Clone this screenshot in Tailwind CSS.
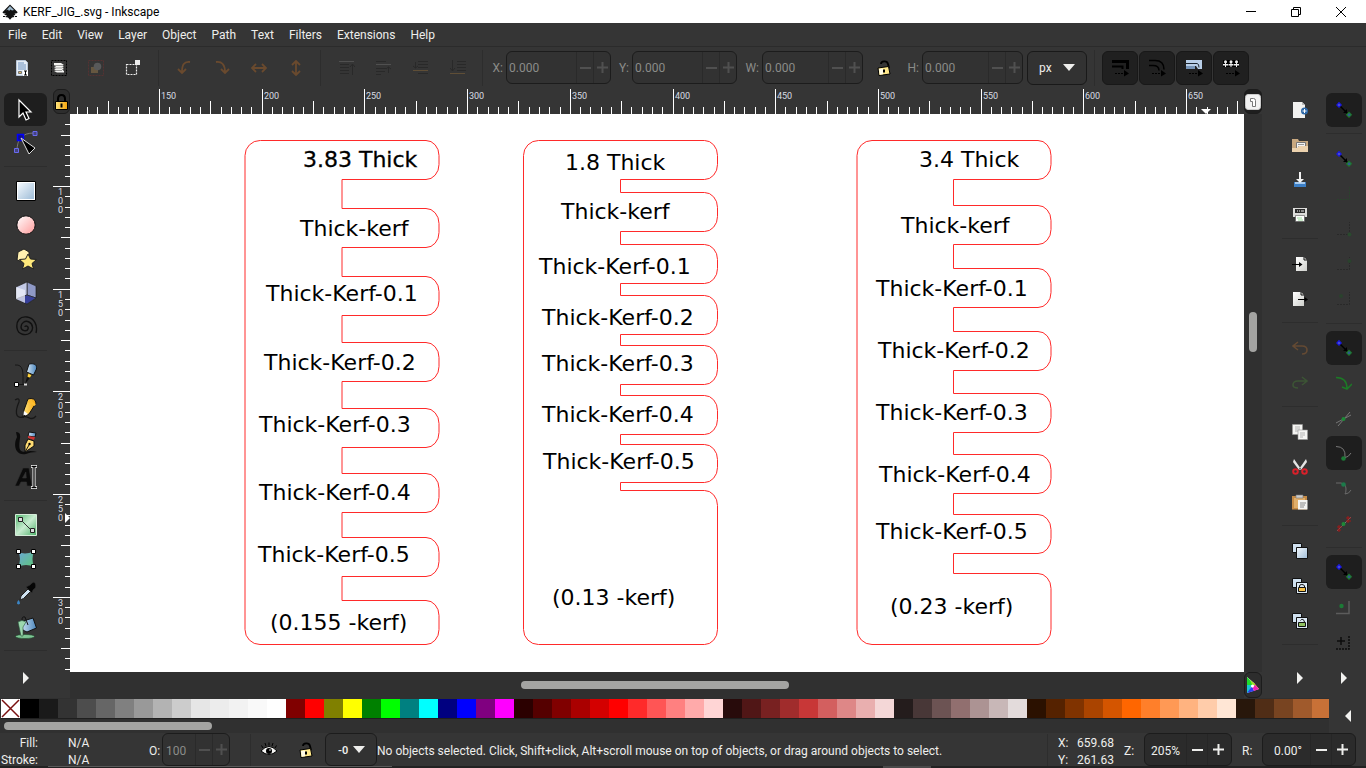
<!DOCTYPE html>
<html lang="en">
<head>
<meta charset="utf-8">
<title>KERF_JIG_.svg - Inkscape</title>
<script src="https://cdn.jsdelivr.net/npm/@tailwindcss/browser@4"></script>
</head>
<body class="h-screen flex flex-col overflow-hidden bg-[#353535] text-[#eeeeec] text-[12px] leading-4 font-['Roboto','Noto_Sans',sans-serif]">

<svg class="absolute w-0 h-0" aria-hidden="true">
  <defs>
    <linearGradient id="blue" x1="0" y1="0" x2="1" y2="1"><stop offset="0" stop-color="#f4f9fd"/><stop offset="1" stop-color="#9fbdd8"/></linearGradient>
    <linearGradient id="pink" x1="0" y1="0" x2="1" y2="1"><stop offset="0" stop-color="#fff"/><stop offset="1" stop-color="#ff9a9a"/></linearGradient>
    <linearGradient id="green" x1="0" y1="0" x2="1" y2="1"><stop offset="0" stop-color="#52b56e"/><stop offset=".5" stop-color="#c8ecd0"/><stop offset="1" stop-color="#4cb068"/></linearGradient>
    <linearGradient id="mesh" x1="0" y1="0" x2="1" y2="1"><stop offset="0" stop-color="#6aa6d8"/><stop offset="1" stop-color="#5fc67a"/></linearGradient>
    <linearGradient id="gold" x1="0" y1="0" x2="1" y2="0"><stop offset="0" stop-color="#ffe680"/><stop offset="1" stop-color="#f5a30a"/></linearGradient>
    <linearGradient id="paper" x1="0" y1="0" x2="1" y2="1"><stop offset="0" stop-color="#fff"/><stop offset="1" stop-color="#cfd0cc"/></linearGradient>
    <linearGradient id="steel" x1="0" y1="0" x2="1" y2="0"><stop offset="0" stop-color="#d8e9f7"/><stop offset="1" stop-color="#4b86bd"/></linearGradient>
  </defs>
  <symbol id="node-snap" viewBox="0 0 18 18">
    <path d="M4 4l9 9" stroke="#000" stroke-width="1.4"/><path d="M12 8v4H8z" fill="#000"/>
    <path d="M4 .8L7 4 4 7 1 4z" fill="#1a1adf"/><circle cx="4" cy="4" r="1" fill="#5a5ad0"/>
    <path d="M14 10.500l3.200 3.300-3.200 3.200-3.200-3.200z" fill="#1c7a26"/><circle cx="14" cy="13.800" r="1.500" fill="#2e5a8a"/>
  </symbol>
  <symbol id="open-lock" viewBox="0 0 16 18">
    <path d="M5 5c0-3 6-4 7 0l1 4" fill="none" stroke="#000" stroke-width="1.800"/>
    <path d="M2 9l10.500-1.500L14 15 3 16.500z" fill="#ffe88a" stroke="#000"/><path d="M3 10l4-.6v5.900l-3.300.4z" fill="#fffbe6"/>
    <path d="M7 10.500h2v3H7z" fill="#000"/>
  </symbol>
  <symbol id="triangle-right" viewBox="0 0 8 12"><path d="M1 0l6 6-6 6z" fill="#f2f2f0"/></symbol>
  <symbol id="triangle-down" viewBox="0 0 12 7"><path d="M0 0h12L6 7z" fill="#eeeeec"/></symbol>
</svg>

<!-- Title bar -->
<header class="h-[23px] shrink-0 bg-white text-black flex items-center pr-[3px]">
  <svg class="w-4 h-4 ml-[2px]" viewBox="0 0 16 16"><path d="M8 .5L15.500 8c.5 1-1.500 1.500-3 1.800l1 1.200-2 .5 1 1.500-2.500.5L8 15.800l-2-2.300-3-.5 2-1.500-3-.7 2-1C2 9.500 0 9 .7 8z" fill="#111"/><path d="M8 2l4 4-2 .5-1.500-1L7 7 6 5.500 4 6.500z" fill="#9db8cc"/><path d="M1 12h2v1H1zM13 12h2v1h-2z" fill="#111"/></svg>
  <h1 class="ml-[5px] grow">KERF_JIG_.svg - Inkscape</h1>
  <button aria-label="Minimize" class="w-[45px] h-full grid place-items-center"><svg class="w-[10px] h-[10px]" viewBox="0 0 10 10"><path d="M0 4.500h10" stroke="#000"/></svg></button>
  <button aria-label="Restore" class="w-[45px] h-full grid place-items-center"><svg class="w-[10px] h-[10px]" viewBox="0 0 10 10" fill="none" stroke="#000"><path d="M.5 2.500h7v7h-7zM2.500 2V.5h7v7H8"/></svg></button>
  <button aria-label="Close" class="w-[45px] h-full grid place-items-center"><svg class="w-[10px] h-[10px]" viewBox="0 0 10 10"><path d="M0 0l10 10M10 0L0 10" stroke="#000"/></svg></button>
</header>

<!-- Menu bar -->
<nav class="h-6 shrink-0 flex items-center gap-[15px] pl-2 border-b border-[#2b2b2b]">
  <button>File</button><button>Edit</button><button>View</button><button>Layer</button><button>Object</button><button>Path</button><button>Text</button><button>Filters</button><button>Extensions</button><button>Help</button>
</nav>

<!-- Tool controls -->
<section aria-label="Tool controls" class="h-[42px] shrink-0 flex items-center pl-[3px] pb-px">
  <button aria-label="Select all" class="w-[37px] h-8 grid place-items-center"><svg class="w-4 h-4" viewBox="0 0 16 16"><path d="M2.500.5h9l2 2v13h-11z" fill="#e6eef7" stroke="#b8c6d8"/><path d="M4 3h6M4 5h8M4 7h8M4 9h8" stroke="#6f93c0"/><path d="M4.500 11.500h3v2h-3z" fill="#e0b860" stroke="#777"/><path d="M9 10h5v6H9z" fill="#fff"/><path d="M10 11h3M10 15h3M11.500 11v4" stroke="#000"/></svg></button>
  <button aria-label="Select all in all layers" class="w-[37px] h-8 grid place-items-center"><svg class="w-4 h-4" viewBox="0 0 16 16"><path d="M.5.500h15v15H.5z" fill="none" stroke="#000" stroke-dasharray="2 1"/><path d="M3 3h7l3 2-2 .5 2 1.500-2 .5 2 1.500-2 .5 2 1.500v1.500H6L3 11l2-.5L3 9l2-.5L3 7l2-.5L3 5z" fill="#f4f4f2"/><path d="M4 5.500h7M4 8h7M4 10.500h7" stroke="#777" stroke-width=".7"/></svg></button>
  <button aria-label="Deselect" class="w-[37px] h-8 grid place-items-center opacity-30"><svg class="w-4 h-4" viewBox="0 0 16 16"><path d="M.5.500h15v15H.5z" fill="none" stroke="#a02c2c" stroke-dasharray="2 1"/><path d="M3 7h7v6H3z" fill="#d6a55a"/><circle cx="9.500" cy="6.500" r="3.800" fill="#a8acb0"/></svg></button>
  <button aria-label="Toggle touch selection" class="w-[37px] h-8 grid place-items-center"><svg class="w-4 h-4" viewBox="0 0 16 16"><path d="M1.500 4.500h10v10h-10z" fill="none" stroke="#eee" stroke-width="1.200" stroke-dasharray="2 1"/><path d="M10 0h5v5h-5z" fill="#eee"/></svg></button>
  <div class="ml-[7px] mr-[7px] w-px h-9 bg-[#2d2d2d]"></div>
  <button aria-label="Rotate left" class="w-[37px] h-8 grid place-items-center"><svg class="w-4 h-4" viewBox="0 0 16 16" fill="none" stroke="#6a4a2e" stroke-width="1.800"><path d="M13 2C7 1 5 5 5 12M1 9l4 4 4-4"/></svg></button>
  <button aria-label="Rotate right" class="w-[37px] h-8 grid place-items-center"><svg class="w-4 h-4" viewBox="0 0 16 16" fill="none" stroke="#6a4a2e" stroke-width="1.800"><path d="M2 2c6-1 9 3 9 10M7 9l4 4 4-4"/></svg></button>
  <button aria-label="Flip horizontal" class="w-[37px] h-8 grid place-items-center"><svg class="w-4 h-4" viewBox="0 0 16 16" fill="none" stroke="#6a4a2e" stroke-width="1.800"><path d="M1 8h14M5 4L1 8l4 4M11 4l4 4-4 4"/></svg></button>
  <button aria-label="Flip vertical" class="w-[37px] h-8 grid place-items-center"><svg class="w-4 h-4" viewBox="0 0 16 16" fill="none" stroke="#6a4a2e" stroke-width="1.800"><path d="M8 1v14M4 5l4-4 4 4M4 11l4 4 4-4"/></svg></button>
  <div class="ml-[6px] mr-[7px] w-px h-9 bg-[#2d2d2d]"></div>
  <button aria-label="Raise to top" class="w-[37px] h-8 grid place-items-center"><svg class="w-4 h-4" viewBox="0 0 16 16" fill="none" stroke="#292929"><path d="M1 4.500h9M1 7.500h9M1 10.500h9M1 13.500h9M13.500 4v11M11 7l2.500-3L16 7"/><path d="M0 1.500h15" stroke="#505050"/></svg></button>
  <button aria-label="Raise" class="w-[37px] h-8 grid place-items-center"><svg class="w-4 h-4" viewBox="0 0 16 16" fill="none" stroke="#292929"><path d="M0 1.500h10M0 8.500h10M0 11.500h9M0 14.500h5M12.500 7v6M10 9l2.500-2L15 9"/><path d="M0 4.500h15" stroke="#505050"/></svg></button>
  <button aria-label="Lower" class="w-[37px] h-8 grid place-items-center"><svg class="w-4 h-4" viewBox="0 0 16 16" fill="none" stroke="#292929"><path d="M5 1.500h10M5 4.500h10M5 7.500h10M5 13.500h10M2.500 2v6M0 6l2.500 2L5 6"/><path d="M0 10.500h15" stroke="#5f4e36"/></svg></button>
  <button aria-label="Lower to bottom" class="w-[37px] h-8 grid place-items-center"><svg class="w-4 h-4" viewBox="0 0 16 16" fill="none" stroke="#292929"><path d="M7 1.500h9M7 4.500h9M7 7.500h9M7 10.500h9M2.500 0v11M0 8l2.500 3L5 8"/><path d="M0 13.500h15" stroke="#5f4e36"/></svg></button>
  <div class="ml-[6px] w-px h-9 bg-[#2d2d2d]"></div>

  <label for="fx" class="w-[23px] text-right pr-[3px] text-[#8b8c89]">X:</label>
  <div class="w-[105px] h-[33px] flex rounded-md border border-[#1c1c1c] bg-[#323232] text-[#8b8c89]"><input id="fx" value="0.000" class="w-0 grow pl-[2px] bg-transparent"><button aria-label="Decrease X" class="w-[17px] border-l border-[#2a2a2a] grid place-items-center"><i class="w-[11px] h-[2px] bg-[#505050]"></i></button><button aria-label="Increase X" class="w-[17px] border-l border-[#2a2a2a] grid place-items-center"><svg class="w-[11px] h-[11px]" viewBox="0 0 11 11"><path d="M0 5.500h11M5.500 0v11" stroke="#505050" stroke-width="2"/></svg></button></div>
  <label for="fy" class="w-[21px] text-right pr-[3px] text-[#8b8c89]">Y:</label>
  <div class="w-[105px] h-[33px] flex rounded-md border border-[#1c1c1c] bg-[#323232] text-[#8b8c89]"><input id="fy" value="0.000" class="w-0 grow pl-[2px] bg-transparent"><button aria-label="Decrease Y" class="w-[17px] border-l border-[#2a2a2a] grid place-items-center"><i class="w-[11px] h-[2px] bg-[#505050]"></i></button><button aria-label="Increase Y" class="w-[17px] border-l border-[#2a2a2a] grid place-items-center"><svg class="w-[11px] h-[11px]" viewBox="0 0 11 11"><path d="M0 5.500h11M5.500 0v11" stroke="#505050" stroke-width="2"/></svg></button></div>
  <label for="fw" class="w-[25px] text-right pr-[3px] text-[#8b8c89]">W:</label>
  <div class="w-[101px] h-[33px] flex rounded-md border border-[#1c1c1c] bg-[#323232] text-[#8b8c89]"><input id="fw" value="0.000" class="w-0 grow pl-[2px] bg-transparent"><button aria-label="Decrease W" class="w-[17px] border-l border-[#2a2a2a] grid place-items-center"><i class="w-[11px] h-[2px] bg-[#505050]"></i></button><button aria-label="Increase W" class="w-[17px] border-l border-[#2a2a2a] grid place-items-center"><svg class="w-[11px] h-[11px]" viewBox="0 0 11 11"><path d="M0 5.500h11M5.500 0v11" stroke="#505050" stroke-width="2"/></svg></button></div>
  <button aria-label="Lock width and height" class="w-[42px] h-8 grid place-items-center"><svg class="w-4 h-[18px]"><use href="#open-lock"/></svg></button>
  <label for="fh" class="w-[17px] text-right pr-[3px] text-[#8b8c89]">H:</label>
  <div class="w-[101px] h-[33px] flex rounded-md border border-[#1c1c1c] bg-[#323232] text-[#8b8c89]"><input id="fh" value="0.000" class="w-0 grow pl-[2px] bg-transparent"><button aria-label="Decrease H" class="w-[17px] border-l border-[#2a2a2a] grid place-items-center"><i class="w-[11px] h-[2px] bg-[#505050]"></i></button><button aria-label="Increase H" class="w-[17px] border-l border-[#2a2a2a] grid place-items-center"><svg class="w-[11px] h-[11px]" viewBox="0 0 11 11"><path d="M0 5.500h11M5.500 0v11" stroke="#505050" stroke-width="2"/></svg></button></div>
  <div class="ml-1 w-[60px] h-[34px] grid items-center rounded-md border border-[#191919] bg-[#323232]">
    <select aria-label="Units" class="col-start-1 row-start-1 appearance-none w-full h-full pl-[11px] text-[#eeeeec]"><option>px</option></select>
    <svg class="col-start-1 row-start-1 justify-self-end mr-[11px] w-3 h-[7px] pointer-events-none"><use href="#triangle-down"/></svg>
  </div>
  <div class="ml-[7px] mr-[7px] w-px h-9 bg-[#2d2d2d]"></div>
  <div class="flex gap-px">
    <button aria-label="Scale stroke width" class="w-9 h-[34px] rounded-md border border-[#181818] bg-[#202020] grid place-items-center"><svg class="w-[17px] h-[18px]" viewBox="0 0 17 18" fill="none" stroke="#000"><path d="M0 2.500h15.500V10" stroke-width="3"/><path d="M0 7.500h10.500V10" stroke-width="2"/><path d="M3 14.500h10" stroke-dasharray="2 1"/><path d="M12 11l5 3.500-5 3z" fill="#000" stroke="none"/></svg></button>
    <button aria-label="Scale corners" class="w-9 h-[34px] rounded-md border border-[#181818] bg-[#202020] grid place-items-center"><svg class="w-[17px] h-[18px]" viewBox="0 0 17 18" fill="none" stroke="#000"><path d="M0 1.500h6q9 0 9 9M0 6.500h4q6 0 6 5" stroke-width="1.500"/><path d="M3 14.500h10" stroke-dasharray="2 1"/><path d="M12 11l5 3.500-5 3z" fill="#000" stroke="none"/></svg></button>
    <button aria-label="Move gradients" class="w-9 h-[34px] rounded-md border border-[#181818] bg-[#202020] grid place-items-center"><svg class="w-[17px] h-[18px]" viewBox="0 0 17 18"><path d="M0 1h16v9h-4l-2-3H0z" fill="#b9cfe8"/><path d="M0 4.500h11q2 0 2 4" fill="none" stroke="#1a2530"/><path d="M0 7h9v3H0z" fill="#7795b8"/><path d="M3 14.500h10" stroke="#000" stroke-dasharray="2 1"/><path d="M12 11l5 3.500-5 3z"/></svg></button>
    <button aria-label="Move patterns" class="w-9 h-[34px] rounded-md border border-[#181818] bg-[#202020] grid place-items-center"><svg class="w-[17px] h-[18px]" viewBox="0 0 17 18"><path d="M0 1h16v7H0z" fill="#000"/><g fill="#eee"><circle cx="2.500" cy="2.800" r="1.500"/><circle cx="8" cy="2.800" r="1.500"/><circle cx="13.500" cy="2.800" r="1.500"/><path d="M0 5h5v1.500H0zM5.500 5h5v1.500h-5zM11 5h5v1.500h-5zM2 3h1v5H2zM7.500 3h1v5h-1zM13 3h1v5h-1z"/></g><path d="M3 14.500h10" stroke="#000" stroke-dasharray="2 1"/><path d="M12 11l5 3.500-5 3z"/></svg></button>
  </div>
</section>

<main class="grow min-h-0 flex">
  <!-- Toolbox -->
  <aside aria-label="Toolbox" class="w-[53px] shrink-0 flex flex-col pt-1 pl-1 pr-[6px]">
    <button aria-label="Select" class="h-[33px] grid place-items-center rounded-md bg-[#1e1e1e]"><svg class="w-6 h-6" viewBox="0 0 24 24"><path d="M5 2v17l4-4 3 7 3-1.500-3-6.500h5z" fill="#000" stroke="#fff" stroke-width="1.200"/></svg></button>
    <button aria-label="Node" class="h-[34px] grid place-items-center"><svg class="w-6 h-6" viewBox="0 0 24 24"><path d="M3 20C3 8 8 2 20 2" fill="none" stroke="#777"/><path d="M.5 17.500h4v4h-4zM19 .5h4v4h-4z" fill="#444480" stroke="#6a6af0"/><path d="M3.500 3.500h6v6h-6z" fill="#10108a" stroke="#00f" stroke-width="1.500"/><path d="M7 7l14 10-6 6z" fill="#000" stroke="#ddd"/></svg></button>
    <div class="mt-[6px] mb-[7px] h-px bg-[#2d2d2d]"></div>
    <button aria-label="Rectangle" class="h-[34px] grid place-items-center"><svg class="w-5 h-5" viewBox="0 0 20 20"><path d="M.5.500h19v19H.5z" fill="#fff" stroke="#000"/><path d="M2 2h16v16H2z" fill="url(#blue)"/></svg></button>
    <button aria-label="Ellipse" class="h-[34px] grid place-items-center"><svg class="w-5 h-5" viewBox="0 0 20 20"><circle cx="10" cy="10" r="9.200" fill="url(#pink)" stroke="#111"/></svg></button>
    <button aria-label="Star" class="h-[34px] grid place-items-center"><svg class="w-[22px] h-[22px]" viewBox="0 0 22 22" stroke="#222"><path d="M3 4l6-3 5 3v6l-5 4-7-2z" fill="#fff0b0"/><path d="M13 6l2.500 5 6 .5-4.500 4 1.500 5.500-5.500-3-5.500 3 1.500-5.500-4.500-4 6-.5z" fill="#ffe97c"/></svg></button>
    <button aria-label="3D box" class="h-[34px] grid place-items-center"><svg class="w-[22px] h-6" viewBox="0 0 22 24" stroke="#222" stroke-width=".7"><path d="M1 6L12 1l9 4v12l-9 6-11-5z" fill="#dfe3f5"/><path d="M12 1l9 4v12l-9-3z" fill="#8f99c6"/><path d="M12 1v13l-11 4V6z" fill="#c3cae6"/><path d="M1 18l11-4 9 3-9 6z" fill="#37409a"/><path d="M1 6l9 3v13l-9-4z" fill="#eef0fa" fill-opacity=".75" stroke="none"/></svg></button>
    <button aria-label="Spiral" class="h-[34px] grid place-items-center"><svg class="w-6 h-6" viewBox="0 0 24 24"><path d="M11 12c0-2 4-1 3 2s-7 2-7-2 4-7 8-5 5 8 1 11-12 2-13-5S6 1 13 2s11 8 9 16" fill="none" stroke="#111" stroke-width="1.400"/></svg></button>
    <div class="mt-[6px] mb-[7px] h-px bg-[#2d2d2d]"></div>
    <button aria-label="Pen" class="h-[34px] grid place-items-center"><svg class="w-6 h-6" viewBox="0 0 24 24"><path d="M1 2c9-1 8 8 8 19M3 21.500h9" fill="none" stroke="#171717"/><path d="M.5 19.500h4v4h-4z" fill="#fff" stroke="#000"/><path d="M10 20.500h3v2h-3z" fill="#ddd"/><path d="M15 1c6-1 8 1 7.500 5l-3 6-7-3z" fill="url(#steel)" stroke="#111"/><path d="M14 10l4 2-2 3-3-1z" fill="#ffd23a" stroke="#111" stroke-width=".6"/><path d="M13 14l2.500 1.500L11 21z" fill="#111"/></svg></button>
    <button aria-label="Pencil" class="h-[34px] grid place-items-center"><svg class="w-6 h-6" viewBox="0 0 24 24"><path d="M1 3q5-3 4 2c-4 9-4 17 4 15 5-2 8 5 13-1" fill="none" stroke="#171717" stroke-width="1.300"/><path d="M14 2q7-2 8 4l-7 11-6 3 1-7z" fill="url(#gold)" stroke="#111"/><path d="M15 2.500l7 4.500-1.500 2-7-4z" fill="#ffbf30"/><path d="M10 14l4 3-5 3z" fill="#fff"/><path d="M9.500 17.500L12 19l-3 1.500z"/></svg></button>
    <button aria-label="Calligraphy" class="h-[34px] grid place-items-center"><svg class="w-6 h-6" viewBox="0 0 24 24"><path d="M2 1q5 0 4 6C5 15 4 21 11 21q5-2 12 0-7 0-11 2C1 25-1 14 3 6z" fill="#0c0c0c"/><path d="M15 1l7 1-1 4-7-1z" fill="url(#steel)" stroke="#111"/><path d="M14 5l7 1-1 3-6-2z" fill="#c33"/><path d="M14 8l6 2v5l-9 6 0-7z" fill="#ffdc73" stroke="#111"/><path d="M11 21l4-7" stroke="#111"/><circle cx="15.500" cy="13" r="1.200"/></svg></button>
    <button aria-label="Text" class="h-[34px] grid place-items-center"><svg class="w-6 h-6" viewBox="0 0 24 24"><path d="M1 21L9 3h6l3 18h-5l-.5-4H7l-2 4zM8.500 13h3.800l-.5-6z" fill="#0b0b0b" stroke="#333" stroke-width=".6" fill-rule="evenodd"/><path d="M17 1.500h6M17 22.500h6M20 2v20" stroke="#fff" stroke-width="3"/><path d="M17.500 1.500h5M17.500 22.500h5M20 2v20" stroke="#000" stroke-width="1.300"/></svg></button>
    <div class="mt-[6px] mb-[7px] h-px bg-[#2d2d2d]"></div>
    <button aria-label="Gradient" class="h-[34px] grid place-items-center"><svg class="w-[22px] h-[22px]" viewBox="0 0 22 22"><path d="M.5.500h21v21H.5z" fill="url(#green)" stroke="#d5ecd9"/><path d="M6 6l11 11" stroke="#333"/><path d="M3.500 3.500h4v4h-4zM15.500 14.500h4v4h-4z" fill="#ddd" stroke="#222"/></svg></button>
    <button aria-label="Mesh" class="h-[34px] grid place-items-center"><svg class="w-5 h-5" viewBox="0 0 20 20"><path d="M2 2q6 5 16 0-3 8 0 16-8-4-16 0 4-8 0-16z" fill="url(#mesh)"/><path d="M.5.500h4v4h-4zM15.500.500h4v4h-4zM.5 15.500h4v4h-4zM15.500 15.500h4v4h-4z" fill="#fff" stroke="#000"/></svg></button>
    <button aria-label="Dropper" class="h-[34px] grid place-items-center"><svg class="w-6 h-6" viewBox="0 0 24 24"><path d="M14 8l2.500 2.500-7 7-3.500 1.500 1-4z" fill="#cfe3f3" stroke="#222"/><path d="M12 6l6 6 1-3q4-2 2.500-6T16 4z" fill="#050505" stroke="#333" stroke-width=".6"/><path d="M4.500 19q3 4 0 4.500-3-.5 0-4.500z" fill="#3b86c6"/></svg></button>
    <button aria-label="Paint bucket" class="h-[34px] grid place-items-center"><svg class="w-6 h-6" viewBox="0 0 24 24"><ellipse cx="11" cy="21.500" rx="9.500" ry="2" fill="#7fc796" stroke="#1f4b2b" stroke-width=".6"/><path d="M6 7l13-4 3.500 10L13 17q-7-2-7-10z" fill="url(#steel)" stroke="#111"/><path d="M4 7q4-3 8 0l-3 5v9H7z" fill="#9dd8ae" stroke="#28563a" stroke-width=".6"/><path d="M8 5q0-4 3-3l3 8" fill="none" stroke="#111"/></svg></button>
    <div class="mt-[6px] mb-[10px] h-px bg-[#2d2d2d]"></div>
    <button aria-label="More tools" class="h-[34px] grid place-items-center"><svg class="w-2 h-3"><use href="#triangle-right"/></svg></button>
  </aside>

  <!-- Canvas with rulers -->
  <section class="grow min-w-0 grid grid-cols-[17px_minmax(0,1fr)_18px] grid-rows-[25px_minmax(0,1fr)_26px]">
    <button aria-label="Lock guides" class="rounded-md border border-[#1c1c1c] bg-[#2d2d2d] grid place-items-center"><svg class="w-[13px] h-4" viewBox="0 0 13 16"><path d="M3 8V5q0-4 3.500-4T10 5v3" fill="none" stroke="#000" stroke-width="2"/><path d="M.5 7.500h12v8H.5z" fill="url(#gold)" stroke="#000"/><path d="M5.500 9.500h2v4h-2z"/></svg></button>
    <svg id="ruler-top" class="w-full h-full" role="img" aria-label="Horizontal ruler"><path d="M1131 20h10l-5 5z" fill="#fff"/><g></g></svg>
    <button aria-label="Display mode" class="rounded-md border border-[#1c1c1c] bg-[#1e1e1e] grid place-items-center"><svg class="w-4 h-4" viewBox="0 0 16 16"><path d="M3 .500h10q2.500 0 2.500 3v9q0 3-2.500 3H3Q.5 15.500.5 12.500v-9Q.5.500 3 .500z" fill="#f2f2f2" stroke="#ccc"/><path d="M5.500 4.500h3q2 0 2 2v6h-3v-5h-2z" fill="#fff" stroke="#777"/></svg></button>

    <svg id="ruler-left" class="w-full h-full" role="img" aria-label="Vertical ruler"><path d="M12 399v10l5-5z" fill="#fff"/><g></g></svg>
    <div class="bg-white overflow-hidden">
      <svg class="w-full h-full" role="img" aria-label="Kerf jig drawing">
        <g transform="translate(-70 -114)">
          <g fill="none" stroke="#ff2a2a">
            <path d="M260.500 140.500H426a13 15 0 0 1 13 15v9a13 15 0 0 1-13 15H342v29H426a13 15 0 0 1 13 15v9a13 15 0 0 1-13 15H342v29H426a13 15 0 0 1 13 15v9a13 15 0 0 1-13 15H342v27H426a13 15 0 0 1 13 15v9a13 15 0 0 1-13 15H342v27H426a13 15 0 0 1 13 15v9a13 15 0 0 1-13 15H342v26H426a13 15 0 0 1 13 15v9a13 15 0 0 1-13 15H342v25H426a13 15 0 0 1 13 15v9a13 15 0 0 1-13 15H342v24H426a13 15 0 0 1 13 15v14a13 15 0 0 1-13 15H260a15 15 0 0 1-15-15V155.500a15 15 0 0 1 15-15z"/>
            <path d="M538.500 140.500H704.500a13 15 0 0 1 13 15v9a13 15 0 0 1-13 15H620.500v13H704.500a13 15 0 0 1 13 15v9a13 15 0 0 1-13 15H620.500v13H704.500a13 15 0 0 1 13 15v9a13 15 0 0 1-13 15H620.500v12H704.500a13 15 0 0 1 13 15v9a13 15 0 0 1-13 15H620.500v11H704.500a13 15 0 0 1 13 15v9a13 15 0 0 1-13 15H620.500v11H704.500a13 15 0 0 1 13 15v9a13 15 0 0 1-13 15H620.500v10H704.500a13 15 0 0 1 13 15v8a13 15 0 0 1-13 15H620.500v8H704.500a13 15 0 0 1 13 15V629.500a13 15 0 0 1-13 15H538.500a15 15 0 0 1-15-15V155.500a15 15 0 0 1 15-15z"/>
            <path d="M872 140.500H1038a13 15 0 0 1 13 15v9a13 15 0 0 1-13 15H953.500v26H1038a13 15 0 0 1 13 15v9a13 15 0 0 1-13 15H953.500v24H1038a13 15 0 0 1 13 15v9a13 15 0 0 1-13 15H953.500v24H1038a13 15 0 0 1 13 15v9a13 15 0 0 1-13 15H953.500v23H1038a13 15 0 0 1 13 15v9a13 15 0 0 1-13 15H953.500v22H1038a13 15 0 0 1 13 15v9a13 15 0 0 1-13 15H953.500v21H1038a13 15 0 0 1 13 15v9a13 15 0 0 1-13 15H953.500v20H1038a13 15 0 0 1 13 15V629.500a13 15 0 0 1-13 15H872a15 15 0 0 1-15-15V155.500a15 15 0 0 1 15-15z"/>
          </g>
          <g class="text-[22px] font-['DejaVu_Sans',sans-serif]" fill="#000">
            <text x="303" y="167" stroke="#000" stroke-width=".3">3.83 Thick</text>
            <text x="300" y="236">Thick-kerf</text>
            <text x="266" y="301">Thick-Kerf-0.1</text>
            <text x="264" y="370">Thick-Kerf-0.2</text>
            <text x="259" y="432">Thick-Kerf-0.3</text>
            <text x="259" y="500">Thick-Kerf-0.4</text>
            <text x="258" y="562">Thick-Kerf-0.5</text>
            <text x="270" y="630">(0.155 -kerf)</text>
            <text x="565" y="170">1.8 Thick</text>
            <text x="561" y="219">Thick-kerf</text>
            <text x="539" y="274">Thick-Kerf-0.1</text>
            <text x="542" y="325">Thick-Kerf-0.2</text>
            <text x="542" y="371">Thick-Kerf-0.3</text>
            <text x="542" y="422">Thick-Kerf-0.4</text>
            <text x="543" y="469">Thick-Kerf-0.5</text>
            <text x="552" y="605">(0.13 -kerf)</text>
            <text x="919" y="167">3.4 Thick</text>
            <text x="901" y="233">Thick-kerf</text>
            <text x="876" y="296">Thick-Kerf-0.1</text>
            <text x="878" y="358">Thick-Kerf-0.2</text>
            <text x="876" y="420">Thick-Kerf-0.3</text>
            <text x="879" y="482">Thick-Kerf-0.4</text>
            <text x="876" y="539">Thick-Kerf-0.5</text>
            <text x="890" y="614">(0.23 -kerf)</text>
          </g>
        </g>
      </svg>
    </div>
    <div class="bg-[#303030] flex flex-col items-center"><div class="grow-[198]"></div><div class="w-2 h-10 rounded-full bg-[#a4a4a2]"></div><div class="grow-[320]"></div></div>

    <div></div>
    <div class="bg-[#303030] flex items-center"><div class="grow-[451]"></div><div class="w-[268px] h-2 rounded-full bg-[#a4a4a2]"></div><div class="grow-[455]"></div></div>
    <button aria-label="Color management" class="rounded-md border border-[#1c1c1c] bg-[#2d2d2d] grid place-items-center"><svg class="w-[14px] h-4" viewBox="0 0 14 16"><path d="M1 0l7 6 5 6-12 4z" fill="#fff"/><path d="M1 0l7 7-3 2-4 0z" fill="#1fdc2c"/><path d="M1 8l5 0-3 7-2 1z" fill="#16c8d0"/><path d="M1 16l5-7 2 5z" fill="#2a40f0"/><path d="M8 14l-2-5 3-1 4 4z" fill="#f01fb0"/><path d="M9 8l4 4-5-6z" fill="#f02020"/><path d="M4 3l5 4 0 1.500-3-1z" fill="#9be020"/><circle cx="6.500" cy="9" r="1.500" fill="#fff"/></svg></button>
  </section>

  <!-- Commands bar -->
  <aside aria-label="Commands" class="ml-5 w-9 shrink-0 flex flex-col pt-1">
    <button aria-label="New" class="h-[34px] grid place-items-center"><svg class="w-4 h-4" viewBox="0 0 16 16"><path d="M1 0h9l3 3v13H1z" fill="#f2f2f0"/><path d="M10 0v3h3z" fill="#bbb"/><circle cx="12.500" cy="9" r="3.500" fill="#2d68a8"/><path d="M10.500 9h4M12.500 7v4" stroke="#fff"/></svg></button>
    <button aria-label="Open" class="h-[35px] grid place-items-center"><svg class="w-4 h-4" viewBox="0 0 16 16"><path d="M0 2h6l1 2h9v11H0z" fill="#c8a880"/><path d="M4.500 5.500h9v6h-9z" fill="#f2f2f2" stroke="#777"/><path d="M6 7.500h6M6 9.500h6" stroke="#999"/><path d="M0 15V11h5l2-2h9v6z" fill="#ecd2ae"/></svg></button>
    <button aria-label="Save" class="h-[35px] grid place-items-center"><svg class="w-4 h-4" viewBox="0 0 16 16"><path d="M2 10h12v5H2z" fill="#3c7fc6"/><path d="M3 10h10v2H3z" fill="#a9cbed"/><path d="M7 0h2v7h3l-4 4-4-4h3z" fill="#f2f2f2"/></svg></button>
    <button aria-label="Print" class="h-[35px] grid place-items-center"><svg class="w-4 h-4" viewBox="0 0 16 16"><path d="M1 1h14v9H1z" fill="#dcdcda"/><path d="M3 2h10v4H3z" fill="#2b2b2b"/><path d="M5 4h1M7 4h1M9 4h3" stroke="#eee"/><path d="M3.500 8.500h9v6h-9z" fill="#fff" stroke="#555" stroke-width=".6"/><path d="M5 11h5M6 13h5" stroke="#9adb9a"/></svg></button>
    <div class="mt-[6px] mb-[7px] h-px bg-[#2d2d2d]"></div>
    <button aria-label="Import" class="h-[35px] grid place-items-center"><svg class="w-4 h-4" viewBox="0 0 16 16"><path d="M4 1h8l3 3v11H4z" fill="url(#paper)"/><path d="M12 1v3h3" fill="none" stroke="#111"/><path d="M0 8.500h8" stroke="#000"/><path d="M7 6l3.500 2.500L7 11z"/></svg></button>
    <button aria-label="Export" class="h-[35px] grid place-items-center"><svg class="w-4 h-4" viewBox="0 0 16 16"><path d="M1 1h8l3 3v11H1z" fill="url(#paper)"/><path d="M9 1v3h3" fill="none" stroke="#111"/><path d="M6 8.500h8" stroke="#000"/><path d="M12.500 6L16 8.500 12.500 11z"/></svg></button>
    <div class="mt-[6px] mb-[7px] h-px bg-[#2d2d2d]"></div>
    <button aria-label="Undo" class="h-[35px] grid place-items-center"><svg class="w-4 h-4" viewBox="0 0 16 16" fill="none" stroke="#644a33" stroke-width="1.600"><path d="M6 2L1 6l5 4M1 6h9q5 0 5 4t-5 4"/></svg></button>
    <button aria-label="Redo" class="h-[35px] grid place-items-center"><svg class="w-4 h-4" viewBox="0 0 16 16" fill="none" stroke="#3c5435" stroke-width="1.600"><path d="M10 2l5 4-5 4M15 6H6Q1 6 1 10q0 3 5 3"/></svg></button>
    <div class="mt-[6px] mb-[7px] h-px bg-[#2d2d2d]"></div>
    <button aria-label="Copy" class="h-[35px] grid place-items-center"><svg class="w-4 h-4" viewBox="0 0 16 16" fill="#f4f4f2" stroke="#999" stroke-width=".6"><path d="M.5.500h10v10H.5z"/><path d="M3 3h5M3 5h5M3 7h4" stroke="#888"/><path d="M6 6h9.500v9.500H6z"/><path d="M8 9h5M8 11h5M8 13h3" stroke="#888"/></svg></button>
    <button aria-label="Cut" class="h-[35px] grid place-items-center"><svg class="w-4 h-4" viewBox="0 0 16 16"><path d="M2 0l7 10-2 1L1 3zM14 0L7 10l2 1 6-8z" fill="#e4e4e4"/><circle cx="3.500" cy="12.500" r="2.300" fill="none" stroke="#d8202a" stroke-width="2"/><circle cx="12.500" cy="12.500" r="2.300" fill="none" stroke="#d8202a" stroke-width="2"/></svg></button>
    <button aria-label="Paste" class="h-[35px] grid place-items-center"><svg class="w-4 h-4" viewBox="0 0 16 16"><path d="M0 2h15v13.500H0z" fill="#c58a45"/><path d="M2 4h11v10H2z" fill="#e0ae6a"/><path d="M4 1h7v3H4z" fill="#ccc" stroke="#777" stroke-width=".6"/><path d="M6 6h9.500v9.500H6z" fill="#f4f4f2"/><path d="M8 9h6M8 11h5M8 13h4" stroke="#888"/></svg></button>
    <div class="mt-[6px] mb-[7px] h-px bg-[#2d2d2d]"></div>
    <button aria-label="Duplicate" class="h-[35px] grid place-items-center"><svg class="w-4 h-4" viewBox="0 0 16 16" stroke="#111"><path d="M.5.500h9v9h-9z" fill="#cfe0ef"/><path d="M4.500 4.500h11v11h-11z" fill="url(#blue)"/></svg></button>
    <button aria-label="Create clone" class="h-[35px] grid place-items-center"><svg class="w-4 h-4" viewBox="0 0 16 16" stroke="#111"><path d="M.5.500h9v9h-9z" fill="#cfe0ef"/><path d="M4.500 4.500h11v11h-11z" fill="#dceaf6"/><path d="M7.500 9.500V8q0-1.500 2.300-1.500T12.500 8v1.500" fill="none"/><path d="M6.500 9.500h7v4h-7z" fill="#f8c24a"/></svg></button>
    <button aria-label="Unlink clone" class="h-[35px] grid place-items-center"><svg class="w-4 h-4" viewBox="0 0 16 16" stroke="#111"><path d="M.5.500h9v9h-9z" fill="#cfe0ef"/><path d="M4.500 4.500h11v11h-11z" fill="#dceaf6"/><path d="M8.500 7.500q1-1.500 2.300-1 1.700.5 1.700 3" fill="none"/><path d="M6.500 9.500h7v4h-7z" fill="#8fc060"/></svg></button>
    <div class="mt-[6px] mb-4 h-px bg-[#2d2d2d]"></div>
    <button aria-label="More commands" class="h-[34px] grid place-items-center"><svg class="w-2 h-3"><use href="#triangle-right"/></svg></button>
  </aside>

  <!-- Snap bar -->
  <aside aria-label="Snap controls" class="ml-2 mr-1 w-9 shrink-0 flex flex-col pt-1">
    <button aria-label="Enable snapping" class="h-[34px] rounded-md bg-[#1e1e1e] grid place-items-center"><svg class="w-[18px] h-[18px]"><use href="#node-snap"/></svg></button>
    <div class="mt-[6px] mb-[7px] h-px bg-[#2d2d2d]"></div>
    <button aria-label="Snap bounding boxes" class="h-[35px] grid place-items-center"><svg class="w-[18px] h-[18px]"><use href="#node-snap"/></svg></button>
    <button aria-label="Snap edges" class="h-[35px] grid place-items-center"><svg class="w-4 h-4" viewBox="0 0 16 16"><path d="M1 13.500h12.500V1" fill="none" stroke="#2b422d" stroke-dasharray="2 1"/></svg></button>
    <button aria-label="Snap corners" class="h-[35px] grid place-items-center"><svg class="w-4 h-4" viewBox="0 0 16 16"><path d="M1 13.500h12.500V1" fill="none" stroke="#292929" stroke-dasharray="2 1"/><circle cx="13.500" cy="13.500" r="2" fill="#2a4a2e"/></svg></button>
    <button aria-label="Snap edge midpoints" class="h-[35px] grid place-items-center"><svg class="w-4 h-4" viewBox="0 0 16 16"><path d="M1 13.500h12.500V1" fill="none" stroke="#292929" stroke-dasharray="2 1"/><circle cx="13.500" cy="5" r="2" fill="#2a422d"/></svg></button>
    <button aria-label="Snap centers" class="h-[35px] grid place-items-center"><svg class="w-4 h-4" viewBox="0 0 16 16"><path d="M1 13.500h12.500V1" fill="none" stroke="#292929" stroke-dasharray="2 1"/><circle cx="5" cy="5" r="2" fill="#2a422d"/></svg></button>
    <div class="mt-[7px] mb-[7px] h-px bg-[#2d2d2d]"></div>
    <button aria-label="Snap nodes" class="h-[34px] mb-px rounded-md bg-[#1e1e1e] grid place-items-center"><svg class="w-[18px] h-[18px]"><use href="#node-snap"/></svg></button>
    <button aria-label="Snap to paths" class="h-[35px] grid place-items-center"><svg class="w-4 h-4" viewBox="0 0 16 16" fill="none" stroke="#1c7a26" stroke-width="1.500"><path d="M0 1.500q11 0 11 11M6 11l5 2 5-5"/></svg></button>
    <button aria-label="Snap to intersections" class="h-[35px] grid place-items-center"><svg class="w-4 h-4" viewBox="0 0 16 16" stroke="#777"><path d="M0 12L15 4M2 15L14 1"/><circle cx="7.500" cy="8" r="2" fill="#1c8a36" stroke="none"/></svg></button>
    <button aria-label="Snap cusp nodes" class="h-[34px] mb-px rounded-md bg-[#1e1e1e] grid place-items-center"><svg class="w-4 h-4" viewBox="0 0 16 16"><path d="M0 1.500q10 0 9 11M8 13q5-1 7-5" fill="none" stroke="#777"/><circle cx="7.500" cy="13.500" r="2.300" fill="#1c7a36"/></svg></button>
    <button aria-label="Snap smooth nodes" class="h-[35px] grid place-items-center"><svg class="w-4 h-4" viewBox="0 0 16 16"><path d="M0 2h5q5 1 5 6 0 4-1 5 4 0 6-4" fill="none" stroke="#6a6a6a"/><circle cx="7.500" cy="3.500" r="2.300" fill="#1c7a4a"/></svg></button>
    <button aria-label="Snap line midpoints" class="h-[35px] grid place-items-center"><svg class="w-4 h-4" viewBox="0 0 16 16"><path d="M1 15L15 1" stroke="#777"/><path d="M1 11l5 0M1 14h4M10 2h5M10 5h5M3 9v7M12 0v7" stroke="#a01818"/><circle cx="7.500" cy="8" r="2" fill="#1c8a36"/></svg></button>
    <div class="mt-[6px] mb-[7px] h-px bg-[#2d2d2d]"></div>
    <button aria-label="Snap other points" class="h-[34px] mb-px rounded-md bg-[#1e1e1e] grid place-items-center"><svg class="w-[18px] h-[18px]"><use href="#node-snap"/></svg></button>
    <button aria-label="Snap object centers" class="h-[35px] grid place-items-center"><svg class="w-4 h-4" viewBox="0 0 16 16"><path d="M0 13.500h13V1" fill="none" stroke="#5c5c5c" stroke-width="1.500"/><circle cx="5.500" cy="6" r="2.200" fill="#1c7a36"/></svg></button>
    <button aria-label="Snap rotation centers" class="h-[35px] grid place-items-center"><svg class="w-4 h-4" viewBox="0 0 16 16" fill="none" stroke="#0c0c0c" stroke-width="1.500"><path d="M0 14h13V1" stroke-dasharray="2 1"/><path d="M1 6h8M5 2v8"/></svg></button>
    <div class="grow"></div>
    <button aria-label="More snap options" class="h-[34px] mb-[3px] grid place-items-center"><svg class="w-2 h-3"><use href="#triangle-right"/></svg></button>
  </aside>
</main>

<!-- Palette -->
<section aria-label="Palette" class="h-[35px] shrink-0 flex">
  <div class="grow min-w-0 overflow-hidden bg-[#303030] pt-px pl-px">
    <div id="swatches" class="flex h-[19px]">
      <button aria-label="None" class="w-[19px] h-[19px] shrink-0"><svg class="w-[19px] h-[19px]" viewBox="0 0 19 19"><path d="M0 0h19v19H0z" fill="#fff"/><path d="M1 1l17 17M18 1L1 18" stroke="#7a1010" stroke-width="1.500"/></svg></button>
    </div>
    <div class="h-[15px] border-t border-[#1f1f1f] flex items-center"><div class="ml-[3px] w-[208px] h-2 rounded-full bg-[#a4a4a2]"></div></div>
  </div>
  <button aria-label="Palette menu" class="w-[37px] grid place-items-center"><svg class="w-2 h-3 rotate-180"><use href="#triangle-right"/></svg></button>
</section>

<!-- Status bar -->
<footer class="h-[33px] shrink-0 flex items-center">
  <dl class="w-[149px] pt-1 grid grid-cols-[38px_1fr] gap-x-[30px] leading-[17px]"><dt class="justify-self-end">Fill:</dt><dd>N/A</dd><dt class="justify-self-end">Stroke:</dt><dd>N/A</dd></dl>
  <label for="op" class="w-[13px] pt-[2px]">O:</label>
  <div class="w-[68px] h-[33px] flex rounded-md border border-[#1c1c1c] bg-[#323232] text-[#8b8c89]"><input id="op" value="100" class="w-0 grow pl-[3px] pt-[2px] bg-transparent"><button aria-label="Decrease opacity" class="w-[17px] border-l border-[#2a2a2a] grid place-items-center"><i class="w-[11px] h-[2px] bg-[#505050]"></i></button><button aria-label="Increase opacity" class="w-[17px] border-l border-[#2a2a2a] grid place-items-center"><svg class="w-[11px] h-[11px]" viewBox="0 0 11 11"><path d="M0 5.500h11M5.500 0v11" stroke="#505050" stroke-width="2"/></svg></button></div>
  <div class="ml-5 w-px h-8 bg-[#2d2d2d]"></div>
  <button aria-label="Layer visibility" class="w-9 h-8 grid place-items-center"><svg class="w-4 h-4" viewBox="0 0 16 16"><path d="M0 9q8-9 16 0-8 7-16 0z" fill="#f4f4f2" stroke="#000"/><circle cx="8" cy="9" r="3"/><circle cx="9" cy="8" r=".8" fill="#fff"/><path d="M2 6L.5 3.500M5 4L4 1M8 3.500V.5M11 4l1-3M14 6l1.500-2.500" stroke="#000"/></svg></button>
  <button aria-label="Layer lock" class="w-[38px] h-8 grid place-items-center"><svg class="w-4 h-[18px]"><use href="#open-lock"/></svg></button>
  <div class="w-[52px] h-[33px] grid items-center rounded-md border border-[#1c1c1c] bg-[#323232]">
    <select aria-label="Current layer" class="col-start-1 row-start-1 appearance-none w-full h-full pl-3 pt-[2px] text-[11px] font-semibold text-[#eeeeec]"><option>-0</option></select>
    <svg class="col-start-1 row-start-1 justify-self-end mr-[11px] w-3 h-[7px] pointer-events-none"><use href="#triangle-down"/></svg>
  </div>
  <p class="pt-[2px] grow whitespace-nowrap">No objects selected. Click, Shift+click, Alt+scroll mouse on top of objects, or drag around objects to select.</p>
  <div class="w-px h-8 bg-[#2d2d2d]"></div>
  <dl class="ml-[10px] pt-1 w-14 grid grid-cols-[1fr_auto] leading-[17px]"><dt>X:</dt><dd>659.68</dd><dt>Y:</dt><dd>261.63</dd></dl>
  <label for="zoom" class="ml-[10px] w-5 pt-[2px]">Z:</label>
  <div class="w-[88px] h-[33px] flex rounded-md border border-[#1c1c1c] bg-[#2b2b2b]"><input id="zoom" value="205%" class="w-0 grow pl-[6px] pt-[2px] bg-transparent"><button aria-label="Zoom out" class="w-[21px] border-l border-[#262626] grid place-items-center"><i class="w-[11px] h-[2px] bg-[#eeeeec]"></i></button><button aria-label="Zoom in" class="w-[24px] pr-[2px] border-l border-[#262626] grid place-items-center"><svg class="w-[11px] h-[11px]" viewBox="0 0 11 11"><path d="M0 5.500h11M5.500 0v11" stroke="#eeeeec" stroke-width="2"/></svg></button></div>
  <label for="rot" class="ml-[10px] w-5 pt-[2px]">R:</label>
  <div class="w-[94px] h-[33px] mr-[10px] flex rounded-md border border-[#1c1c1c] bg-[#2b2b2b]"><input id="rot" value="0.00°" class="w-0 grow pr-[8px] pt-[2px] text-right bg-transparent"><button aria-label="Rotate counter-clockwise" class="w-[21px] border-l border-[#262626] grid place-items-center"><i class="w-[11px] h-[2px] bg-[#eeeeec]"></i></button><button aria-label="Rotate clockwise" class="w-[24px] pr-[2px] border-l border-[#262626] grid place-items-center"><svg class="w-[11px] h-[11px]" viewBox="0 0 11 11"><path d="M0 5.500h11M5.500 0v11" stroke="#eeeeec" stroke-width="2"/></svg></button></div>
</footer>
<div class="h-[2px] shrink-0 bg-[#222] flex"><div class="ml-12 w-[344px] h-px bg-[#5a5a5a]"></div><div class="ml-[491px] w-12 h-full bg-[#4a4a4a]"></div></div>

<script>
  const NS = 'http://www.w3.org/2000/svg';
  const SCALE = 2.054;
  const add = (parent, name, attrs, text) => {
    const el = document.createElementNS(NS, name);
    for (const k in attrs) el.setAttribute(k, attrs[k]);
    if (text !== undefined) el.textContent = text;
    parent.appendChild(el);
  };
  function drawRulers() {
    const top = document.querySelector('#ruler-top g');
    const left = document.querySelector('#ruler-left g');
    const width = top.parentNode.getBoundingClientRect().width;
    const height = left.parentNode.getBoundingClientRect().height;
    top.replaceChildren();
    left.replaceChildren();
    for (let v = 110; ; v += 5) {
      const x = Math.round(89 + (v - 150) * SCALE);
      if (x >= width) break;
      const len = v % 50 === 0 ? 25 : v % 25 === 0 ? 13 : 7;
      add(top, 'rect', {x, y: 25 - len, width: 1, height: len, fill: '#fff'});
      if (v % 50 === 0 && x + 20 < width) add(top, 'text', {x: x + 2, y: 10, 'font-size': 9, fill: '#d8dde4'}, v);
    }
    for (let v = 70; ; v += 5) {
      const y = Math.round(72 + (v - 100) * SCALE);
      if (y >= height) break;
      const len = v % 50 === 0 ? 17 : v % 25 === 0 ? 9 : 5;
      add(left, 'rect', {x: 17 - len, y, width: len, height: 1, fill: '#fff'});
      if (v % 50 === 0 && y + 28 < height) [...String(v)].forEach((d, i) => add(left, 'text', {x: 5, y: y + 9 + i * 9, 'font-size': 9, fill: '#d8dde4'}, d));
    }
  }
  // Redraw whenever either ruler gets a new size, including the first layout.
  const observer = new ResizeObserver(drawRulers);
  observer.observe(document.getElementById('ruler-top'));
  observer.observe(document.getElementById('ruler-left'));
  addEventListener('load', drawRulers);

  const colors = '000000 1a1a1a 333333 4d4d4d 666666 808080 999999 b3b3b3 cccccc e6e6e6 ececec f2f2f2 f9f9f9 ffffff 800000 ff0000 808000 ffff00 008000 00ff00 008080 00ffff 000080 0000ff 800080 ff00ff 2b0000 550000 800000 aa0000 d40000 ff0000 ff2a2a ff5555 ff8080 ffaaaa ffd5d5 280b0b 501616 782121 a02c2c c83737 d35f5f de8787 e9afaf f4d7d7 241c1c 483737 6c5353 916f6f ac9393 c8b7b7 e3dbdb 2b1100 552200 803300 aa4400 d45500 ff6600 ff7f2a ff9955 ffb380 ffccaa ffe6d5 28170b 502d16 784421 a05a2c c87137'.split(' ');
  const row = document.getElementById('swatches');
  colors.forEach(c => {
    const b = document.createElement('button');
    b.className = 'w-[19px] h-[19px] shrink-0';
    b.style.backgroundColor = '#' + c;
    b.setAttribute('aria-label', '#' + c);
    row.appendChild(b);
  });
</script>
</body>
</html>
